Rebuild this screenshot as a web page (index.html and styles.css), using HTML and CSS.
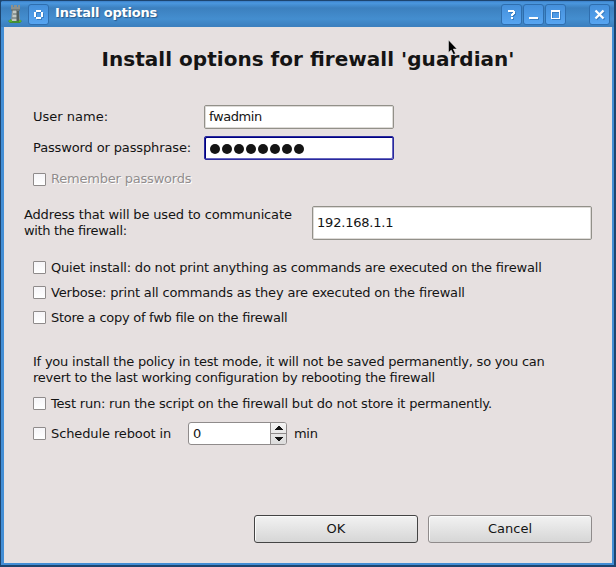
FILE: index.html
```
<!DOCTYPE html>
<html lang="en">
<head>
<meta charset="utf-8">
<title>Install options</title>
<link rel="stylesheet" href="styles.css">
</head>
<body>
<div class="window">
  <header class="titlebar">
    <svg class="app-icon" width="16" height="20" viewBox="0 0 16 20">
      <path d="M1 17l3-2 8 0 3 2-2 2H3z" fill="#438d35"/>
      <path d="M4 1h2v2h1V1h3v2h1V1h2v5h-1l1 11H4L5 6H4z" fill="#8b918f"/>
      <path d="M6 6h3v11H5z" fill="#c4c9c5"/>
      <path d="M4 6h9M6 10h6M5 14h7" stroke="#5b6666"/>
      <path d="M11 7v10" stroke="#535f5e" stroke-width="2"/>
      <path d="M2 17h3M12 17h2" stroke="#58b030" stroke-width="2"/>
    </svg>
    <span class="tool sticky"><svg width="19" height="19" viewBox="0 0 19 19"><path d="M7 5h5v2h2v5h-2v2H7v-2H5V7h2zM7 7v5h5V7z" fill="#fff" fill-rule="evenodd"/></svg></span>
    <span class="title">Install options</span>
    <div class="tools">
      <span class="tool"><svg width="19" height="19" viewBox="0 0 19 19"><path d="M6 5h6v1h1v3h-1v1h-1v1H9V9h1V8h1V7H6zM9 12h2v2H9z" fill="#fff"/></svg></span>
      <span class="tool"><svg width="19" height="19" viewBox="0 0 19 19"><path d="M5 13h9" stroke="#fff" stroke-width="2"/></svg></span>
      <span class="tool"><svg width="19" height="19" viewBox="0 0 19 19"><path d="M5 5h9v9H5zM6 7v6h7V7z" fill="#fff" fill-rule="evenodd"/></svg></span>
      <span class="tool close"><svg width="19" height="19" viewBox="0 0 19 19"><path d="M5.500 5.500l8 8M13.500 5.500l-8 8" stroke="#fff" stroke-width="2.300"/></svg></span>
    </div>
  </header>
  <main class="content">
    <h1 class="heading">Install options for firewall 'guardian'</h1>
    <div class="credentials">
      <label><span class="t-user">User name:</span></label><div class="input"><span class="t-admin">fwadmin</span></div>
      <label><span class="t-pass">Password or passphrase:</span></label><div class="input focused"><i class="dot"></i><i class="dot"></i><i class="dot"></i><i class="dot"></i><i class="dot"></i><i class="dot"></i><i class="dot"></i><i class="dot"></i></div>
    </div>
    <div class="check remember"><i class="box"></i><span class="t-remember">Remember passwords</span></div>
    <div class="address">
      <div class="address-label"><span class="t-addr">Address that will be used to communicate</span><br><span class="t-with">with the firewall:</span></div>
      <div class="input"><span class="t-ip">192.168.1.1</span></div>
    </div>
    <div class="options">
      <div class="check low"><i class="box"></i><span class="t-quiet">Quiet install: do not print anything as commands are executed on the firewall</span></div>
      <div class="check low"><i class="box"></i><span class="t-verbose">Verbose: print all commands as they are executed on the firewall</span></div>
      <div class="check low"><i class="box"></i><span class="t-store">Store a copy of fwb file on the firewall</span></div>
    </div>
    <p class="note"><span class="t-note1">If you install the policy in test mode, it will not be saved permanently, so you can</span><br><span class="t-note2">revert to the last working configuration by rebooting the firewall</span></p>
    <div class="check low"><i class="box"></i><span class="t-test">Test run: run the script on the firewall but do not store it permanently.</span></div>
    <div class="schedule">
      <div class="check low"><i class="box"></i><span class="t-sched">Schedule reboot in</span></div>
      <div class="spin"><span class="value">0</span><svg class="arrows" width="15" height="21" viewBox="0 0 15 21"><path d="M0 10.500h15" stroke="#8f8b8b"/><path d="M7 3h2v1h1v1h1v1h1v1H4V6h1V5h1V4h1zM4 14h8v1h-1v1h-1v1H9v1H7v-1H6v-1H5v-1H4z" fill="#141414"/></svg></div>
      <span class="t-min">min</span>
    </div>
    <footer class="actions"><button class="btn default">OK</button><button class="btn">Cancel</button></footer>
  </main>
  <svg class="pointer" width="12" height="18" viewBox="0 0 12 18"><path d="M2.500 1v12.500l2.700-2.500 2.300 4.500 2-1-2.200-4.500h3.700z" fill="#000" stroke="#eee" stroke-width=".5"/></svg>
</div>
</body>
</html>
```
FILE: styles.css
```
* { box-sizing: border-box; }
body { margin: 0; background: #1d456f; font: 13px/16px "DejaVu Sans", sans-serif; color: #141414; font-feature-settings: "liga" 1; }
.window { width: 616px; height: 567px; position: relative; display: flex; flex-direction: column; border: 1px solid #1d456f; border-right-width: 2px; border-bottom-width: 2px; border-radius: 3px 3px 0 0; background: #438ed5; padding: 0 2px 2px 3px; overflow: hidden; }
.titlebar { height: 26px; flex: none; display: flex; align-items: flex-start; margin: 0 -2px 0 -3px; padding: 3px 4px 0 6px; background: linear-gradient(#3b7fc7, #4b98df 2px, #3c80bf 7px, #448ecf 18px, #3c80bf 25px); }
.tool { display: flex; width: 21px; height: 21px; border: 1px solid #2f6eae; border-radius: 3px; background: linear-gradient(#4590db, #57a5f1); }
.tool svg { filter: drop-shadow(1px 1px 0 #397ec3); }
.sticky { margin-left: 5px; }
.title { margin: 1px 0 0 6px; font-weight: bold; color: #fff; text-shadow: 1px 1px 1px #285989; letter-spacing: -.2px; }
.tools { display: flex; gap: 1px; margin-left: auto; }
.close { margin-left: 22px; }
.content { flex: 1; background: #e6e0e0; padding: 0 20px 20px; display: flex; flex-direction: column; align-items: stretch; }
.heading { margin: 19px 0 0; height: 26px; text-align: center; font-size: 20px; line-height: 26px; white-space: nowrap; letter-spacing: .03px; }
.credentials { display: grid; grid-template-columns: 171px 190px; grid-auto-rows: 24px; row-gap: 7px; margin: 33px 0 0 9px; align-items: center; }
.input { height: 24px; border: 1px solid #929089; border-radius: 2px; background: #fff; display: flex; align-items: center; padding-left: 4px; box-shadow: inset 0 0 0 1px #dedbd8; }
.focused { border-color: #29299d; box-shadow: inset 1px 1px 0 #000080, inset -1px -1px 0 #6868bf; gap: 2px; padding: 2px 0 0 5px; }
.dot { width: 10px; height: 10px; border-radius: 50%; background: #141414; }
.check { height: 16px; margin-left: 9px; display: flex; align-items: center; gap: 5px; white-space: nowrap; }
.low span { padding-top: 2px; }
.box { width: 13px; height: 13px; flex: none; border: 1px solid #8f8b8b; border-radius: 1px; background: linear-gradient(#f6f5f8, #fff); }
.remember { margin-top: 11px; color: #918d8d; text-shadow: 1px 1px 0 #fff; }
.address { display: flex; height: 34px; margin-top: 19px; }
.address-label { width: 288px; white-space: nowrap; padding-top: 1px; }
.address .input { width: 280px; height: 34px; }
.options { margin-top: 19px; display: flex; flex-direction: column; gap: 9px; }
.note { margin: 29px 0 0 9px; white-space: nowrap; }
.note + .check { margin-top: 9px; }
.schedule { display: flex; align-items: center; margin-top: 10px; height: 24px; }
.schedule .check { width: 138px; }
.spin { width: 99px; height: 23px; margin: 0 7px 0 17px; border: 1px solid #8f8b8b; border-radius: 3px; background: #fff; display: flex; align-items: center; justify-content: space-between; padding-left: 4px; overflow: hidden; }
.value { padding-top: 2px; }
.arrows { flex: none; border-left: 1px solid #8f8b8b; width: 16px; background: linear-gradient(#f4f3f3, #dcdcdc); }
.actions { display: flex; gap: 10px; justify-content: flex-end; margin-top: auto; }
.btn { width: 164px; height: 28px; border: 1px solid #8f8b8b; border-radius: 3px; background: linear-gradient(#f2f2f2, #d6d6d6); box-shadow: inset 1px 1px 0 #fafafa; font: inherit; color: inherit; padding: 0; }
.default { border-color: #444; }
.pointer { position: absolute; left: 445px; top: 38px; }
.t-admin { letter-spacing: -.4px; }
.t-pass { letter-spacing: -.13px; }
.t-remember { letter-spacing: -.2px; }
.t-addr { letter-spacing: -.15px; }
.t-with { letter-spacing: -.35px; }
.t-ip { letter-spacing: -.2px; }
.t-quiet { letter-spacing: -.193px; }
.t-verbose { letter-spacing: -.17px; }
.t-store { letter-spacing: -.27px; }
.t-note1 { letter-spacing: -.22px; }
.t-note2 { letter-spacing: -.265px; }
.t-test { letter-spacing: -.2px; }
.t-sched { letter-spacing: -.11px; }
.t-min { letter-spacing: -.3px; padding-top: 1px; }
```
